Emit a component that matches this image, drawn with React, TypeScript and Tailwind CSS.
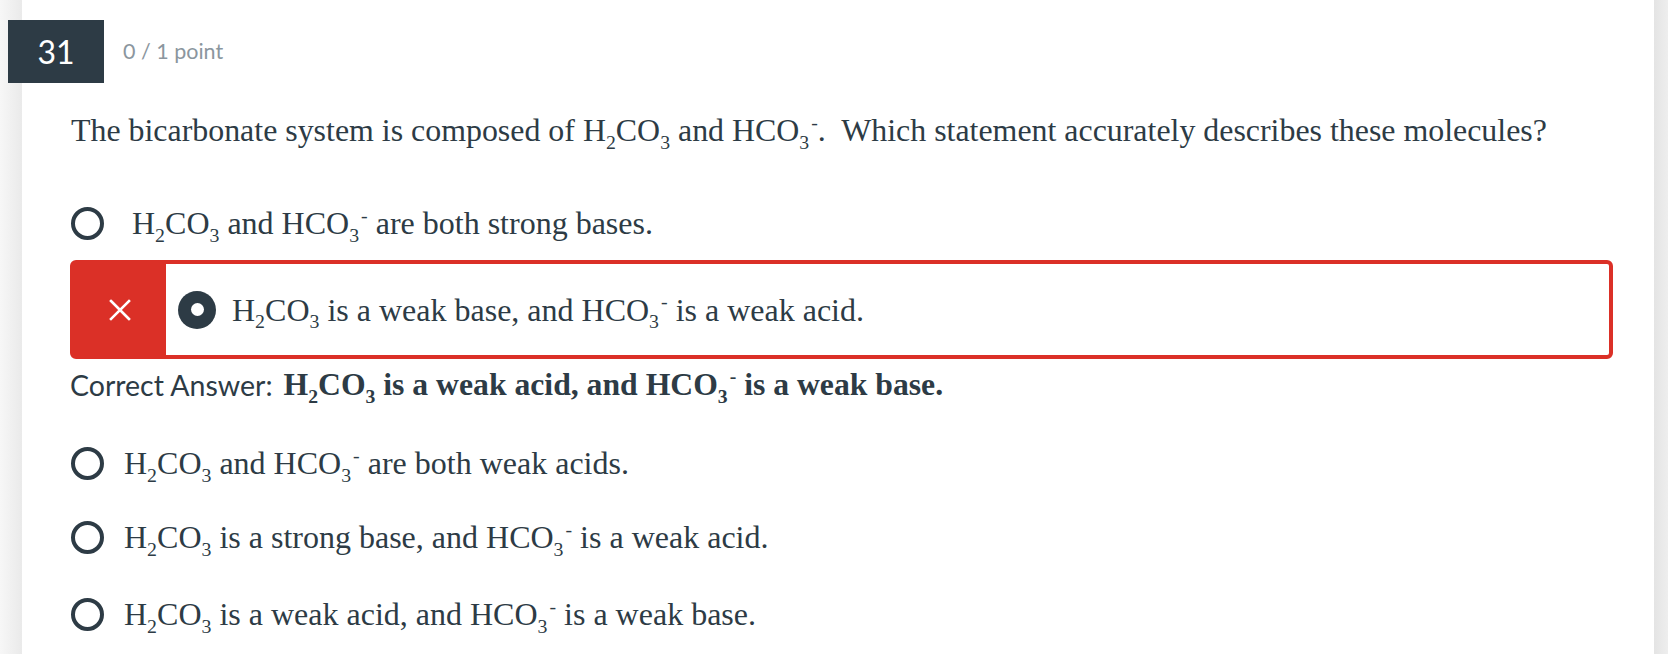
import React from "react";

const Sub = ({ c }: { c: string }) => (
  <span className="relative top-[0.38em] text-[0.62em] leading-none">{c}</span>
);
const Sup = () => (
  <span className="relative top-[-0.62em] ml-[2px] text-[0.62em] leading-none">-</span>
);
const H2CO3 = () => (
  <>
    H<Sub c="2" />CO<Sub c="3" />
  </>
);
const HCO3 = () => (
  <>
    HCO<Sub c="3" />
    <Sup />
  </>
);

const Radio = () => (
  <span className="inline-block h-[33px] w-[33px] shrink-0 rounded-full border-[4px] border-[#2d3b45]" />
);

const serif = "font-['Liberation_Serif',serif]";

export default function App() {
  return (
    <div className="flex h-[654px] w-[1668px] bg-white text-[#2d3b45]">
      <div className="h-full w-[22px] shrink-0 bg-gradient-to-r from-[#f7f7f7] to-[#eaeaea]" />
      <div className="flex-1 pr-[41px]">
        <div className="mt-[20px] ml-[-14px] flex items-center">
          <div className="relative flex h-[63px] w-[96px] items-center justify-center bg-[#2d3b45] font-['Lato',sans-serif] text-[32px] text-white">
            31
          </div>
          <div className="ml-[19px] font-['Lato',sans-serif] text-[21.5px] text-[#8b969e]">
            0 / 1 point
          </div>
        </div>

        <div className={`mt-[28px] ml-[49px] flex h-[40px] items-center ${serif} text-[31.9px] whitespace-nowrap`}>
          <span>
            The bicarbonate system is composed of <H2CO3 /> and <HCO3 />.&nbsp; Which statement accurately describes these molecules?
          </span>
        </div>

        <div className={`mt-[52px] ml-[49px] flex h-[40px] items-center ${serif} text-[32px] whitespace-nowrap`}>
          <Radio />
          <span className="ml-[28px]">
            <H2CO3 /> and <HCO3 /> are both strong bases.
          </span>
        </div>

        <div className="mt-[17px] ml-[48px] flex h-[99px] overflow-hidden rounded-[6px] border-[4px] border-[#db3027] bg-[#db3027]">
          <div className="flex w-[92px] shrink-0 items-center justify-center">
            <svg width="22" height="22" viewBox="0 0 22 22" fill="none">
              <path d="M2 2L20 20M20 2L2 20" stroke="white" strokeWidth="2.6" strokeLinecap="square" />
            </svg>
          </div>
          <div className={`flex flex-1 items-center bg-white pl-[12px] ${serif} text-[32px] whitespace-nowrap`}>
            <span className="relative flex h-[38px] w-[38px] shrink-0 items-center justify-center rounded-full bg-[#2d3b45]">
              <span className="h-[13px] w-[13px] rounded-full bg-white" />
            </span>
            <span className="ml-[16px]">
              <H2CO3 /> is a weak base, and <HCO3 /> is a weak acid.
            </span>
          </div>
        </div>

        <div className="mt-[6px] ml-[48px] flex h-[40px] items-center whitespace-nowrap">
          <span className="font-['Lato',sans-serif] text-[28.5px]">Correct Answer:</span>
          <span className={`ml-[11px] ${serif} text-[31.7px] font-bold`}>
            <H2CO3 /> is a weak acid, and <HCO3 /> is a weak base.
          </span>
        </div>

        <div className={`mt-[38px] ml-[49px] flex h-[40px] items-center ${serif} text-[32px] whitespace-nowrap`}>
          <Radio />
          <span className="ml-[20px]">
            <H2CO3 /> and <HCO3 /> are both weak acids.
          </span>
        </div>

        <div className={`mt-[34px] ml-[49px] flex h-[40px] items-center ${serif} text-[32px] whitespace-nowrap`}>
          <Radio />
          <span className="ml-[20px]">
            <H2CO3 /> is a strong base, and <HCO3 /> is a weak acid.
          </span>
        </div>

        <div className={`mt-[37px] ml-[49px] flex h-[40px] items-center ${serif} text-[32px] whitespace-nowrap`}>
          <Radio />
          <span className="ml-[20px]">
            <H2CO3 /> is a weak acid, and <HCO3 /> is a weak base.
          </span>
        </div>
      </div>
      <div className="h-full w-[14px] shrink-0 bg-gradient-to-r from-[#e4e4e4] to-[#eeeeee]" />
    </div>
  );
}
